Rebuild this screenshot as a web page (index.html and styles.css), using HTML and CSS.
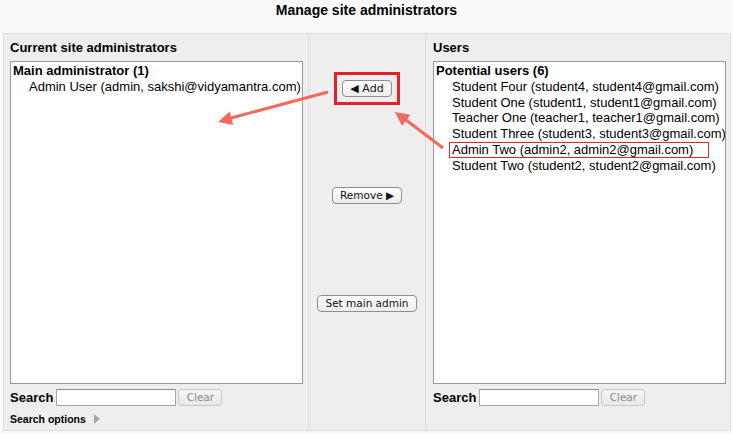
FILE: index.html
```html
<!DOCTYPE html>
<html lang="en">

<head>
  <meta charset="UTF-8">
  <title>Manage site administrators</title>
  <link rel="stylesheet" href="styles.css">
</head>

<body>
  <h2 class="main-title">Manage site administrators</h2>

  <div class="admintable">
    <div class="cell existing">
      <label class="cell-head">Current site administrators</label>
      <div class="listbox">
        <div class="optgroup">Main administrator (1)</div>
        <div class="option">Admin User (admin, sakshi@vidyamantra.com)</div>
      </div>
      <div class="search-row">
        <label>Search</label>
        <input type="text" class="search-box">
        <button class="clear-btn" disabled>Clear</button>
      </div>
      <div class="search-options">Search options <span class="tri"></span></div>
    </div>

    <div class="cell buttons">
      <span class="highlight"><button class="mac-btn add-btn">&#9664; Add</button></span>
      <button class="mac-btn remove-btn">Remove &#9654;</button>
      <button class="mac-btn main-btn">Set main admin</button>
    </div>

    <div class="cell potential">
      <label class="cell-head">Users</label>
      <div class="listbox">
        <div class="optgroup">Potential users (6)</div>
        <div class="option">Student Four (student4, student4@gmail.com)</div>
        <div class="option">Student One (student1, student1@gmail.com)</div>
        <div class="option">Teacher One (teacher1, teacher1@gmail.com)</div>
        <div class="option">Student Three (student3, student3@gmail.com)</div>
        <div class="option picked">Admin Two (admin2, admin2@gmail.com)</div>
        <div class="option">Student Two (student2, student2@gmail.com)</div>
      </div>
      <div class="search-row">
        <label>Search</label>
        <input type="text" class="search-box">
        <button class="clear-btn" disabled>Clear</button>
      </div>
    </div>
  </div>

  <!-- annotation arrows -->
  <svg class="arrows" width="733" height="434" viewBox="0 0 733 434">
    <line x1="328" y1="92" x2="231" y2="118" />
    <polygon points="218,122 233.3,125.1 229.7,111.5" />
    <line x1="443" y1="148" x2="406" y2="120" />
    <polygon points="395,112 410.4,114.8 402,126" />
  </svg>
</body>

</html>
```

FILE: styles.css
```css
body {
  margin: 0;
  width: 733px;
  height: 434px;
  position: relative;
  background: #fafafa;
  font-family: "Liberation Sans", Arial, sans-serif;
  font-size: 13px;
  color: #000;
  overflow: hidden;
}

.main-title {
  margin: 0;
  height: 33px;
  line-height: 21px;
  font-size: 14px;
  font-weight: bold;
  text-align: center;
}

.admintable {
  margin-left: 3px;
  width: 726px;
  display: grid;
  grid-template-columns: 304px 118px 304px;
  background: #eeeeee;
  border: 1px solid #dcdcdc;
  border-right-color: #e4e4e4;
}

.cell {
  display: flex;
  flex-direction: column;
}

.existing {
  padding: 0 0 4px 6px;
}

.potential {
  padding: 0 0 4px 7px;
}

.cell-head {
  margin-top: 6px;
  margin-bottom: 5px;
  line-height: 16px;
  font-weight: bold;
}

.listbox {
  width: 291px;
  height: 320px;
  background: #fff;
  border: 1px solid #9a9a9a;
  overflow: hidden;
  white-space: nowrap;
  line-height: 15.8px;
  padding-top: 1px;
  box-sizing: content-box;
}

.optgroup {
  font-weight: bold;
  padding-left: 2px;
}

.option {
  padding-left: 18px;
}

.option.picked {
  margin-left: 15px;
  padding-left: 2px;
  width: 256px;
  border: 1px solid #d42a2a;
  line-height: 14px;
}

.search-row {
  display: flex;
  align-items: center;
  margin-top: 4px;
  height: 18px;
}

.search-row label {
  font-weight: bold;
  margin-right: 3px;
}

.search-box {
  width: 118px;
  height: 15px;
  margin: 0;
  padding: 0;
  border: 1px solid #a6a6a6;
  border-top-color: #8c8c8c;
  background: #fff;
}

.clear-btn {
  margin-left: 2px;
  width: 44px;
  height: 17px;
  padding: 0;
  font-family: "DejaVu Sans", sans-serif;
  font-size: 10.5px;
  color: #8a8a8a;
  background: linear-gradient(#f6f6f6, #e8e8e8);
  border: 1px solid #c8c8c8;
  border-radius: 3px;
}

.search-options {
  margin-top: 6px;
  font-size: 10.5px;
  font-weight: bold;
  line-height: 14px;
  display: flex;
  align-items: center;
}

.search-options .tri {
  margin-left: 8px;
  width: 0;
  height: 0;
  border-top: 5px solid transparent;
  border-bottom: 5px solid transparent;
  border-left: 6px solid #a8a8a8;
}

.buttons {
  align-items: center;
  border-left: 1px solid #dcdcdc;
  border-right: 1px solid #dcdcdc;
  padding-top: 38px;
}

.mac-btn {
  height: 17px;
  padding: 0 7px;
  font-family: "DejaVu Sans", sans-serif;
  font-size: 10.5px;
  line-height: 15px;
  color: #111;
  background: linear-gradient(#ffffff, #ececec);
  border: 1px solid #8e8e8e;
  border-radius: 4px;
}

.highlight {
  display: flex;
  padding: 5px;
  border: 3px solid #e3232b;
}

.add-btn {
  font-size: 11px;
}

.remove-btn {
  margin-top: 82px;
}

.main-btn {
  margin-top: 91px;
}

.arrows {
  position: absolute;
  left: 0;
  top: 0;
  pointer-events: none;
}

.arrows line {
  stroke: #f26a5c;
  stroke-width: 3;
}

.arrows polygon {
  fill: #f26a5c;
}
```
